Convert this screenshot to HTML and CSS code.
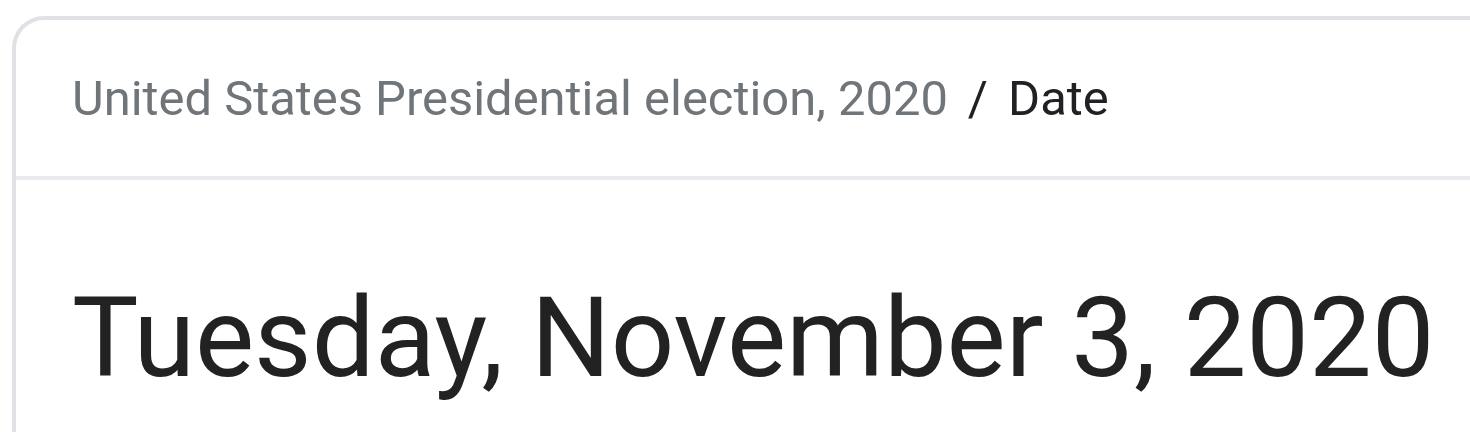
FILE: index.html
```html
<!DOCTYPE html>
<html>
<head>
<meta charset="utf-8">
<link rel="stylesheet" href="styles.css">
</head>
<body>
<div class="card">
  <div class="crumbs">
    <span class="crumb-link">United States Presidential election, 2020</span>
    <span class="sep">/</span>
    <span class="crumb-current">Date</span>
  </div>
  <div class="body">
    <div class="title">Tuesday, November 3, 2020</div>
  </div>
</div>
</body>
</html>
```
FILE: styles.css
```css
html, body {
  margin: 0;
  padding: 0;
  background: #ffffff;
  overflow: hidden;
}
body {
  font-family: Roboto, "Noto Sans", Arial, sans-serif;
  padding: 16px 0 0 12px;
}
.card {
  width: 1600px;
  height: 600px;
  border: 4px solid #dfe1e5;
  border-right: none;
  border-radius: 32px 0 0 0;
  box-sizing: border-box;
}
.crumbs {
  height: 156px;
  display: flex;
  align-items: center;
  padding-left: 56px;
  border-bottom: 4px solid #e8eaed;
  font-size: 48.9px;
  white-space: nowrap;
}
.crumb-link { color: #70757a; }
.sep { color: #202124; margin: 0 20px; }
.crumb-current { color: #202124; }
.body {
  padding: 91px 0 0 56px;
}
.title {
  font-size: 111.6px;
  color: #222222;
  white-space: nowrap;
  line-height: 1.2;
}
```
